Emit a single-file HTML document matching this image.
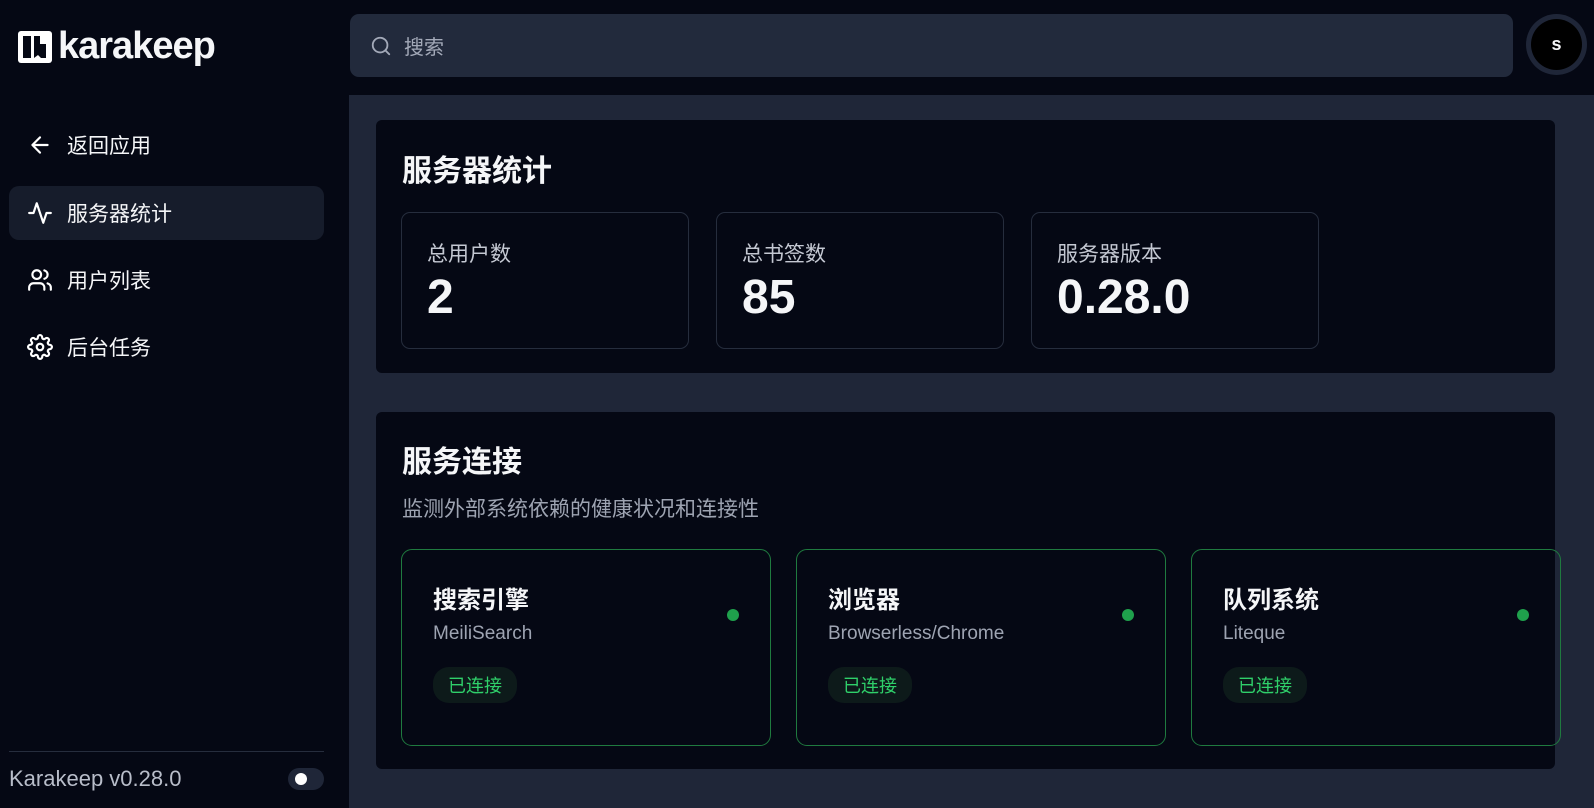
<!DOCTYPE html>
<html><head><meta charset="utf-8"><style>
*{box-sizing:border-box;margin:0;padding:0}
body{width:1594px;height:808px;background:#050814;font-family:"Liberation Sans","Noto Sans CJK SC",sans-serif;color:#f5f6f8;position:relative;overflow:hidden}
.abs{position:absolute}
.side{left:0;top:0;width:349px;height:808px;background:#050814}
.logo{left:18px;top:25px;display:flex;align-items:center;gap:6px;font-size:38px;font-weight:700;letter-spacing:-1px}
.nav{left:9px;width:315px;height:54px;border-radius:10px;display:flex;align-items:center;padding-left:18px;font-size:21px;gap:14px}
.nav svg{width:26px;height:26px;stroke:#fff;fill:none;stroke-width:2;stroke-linecap:round;stroke-linejoin:round}
.main{left:349px;top:95px;width:1245px;height:713px;background:#1f2638}
.search{left:350px;top:14px;width:1163px;height:63px;background:#222a3c;border-radius:9px;display:flex;align-items:center;padding-left:20px;gap:12px;color:#a3a9b8;font-size:20px}
.card{background:#050814;border-radius:6px}
h2{font-size:30px;font-weight:700}
.stat{width:288px;height:137px;border:1px solid #262d3d;border-radius:9px;padding:25px 25px;flex-shrink:0}
.stat .l{font-size:21px;color:#c4c8d2}
.stat .v{font-size:48px;font-weight:700;margin-top:2px}
.svc{width:370px;height:197px;border:1.5px solid #1f7a3f;border-radius:11px;padding:30px 31px;position:relative;flex-shrink:0}
.svc .t{font-size:24px;font-weight:700}
.svc .s{font-size:19px;color:#9ea4b2;margin-top:8px}
.svc .b{display:inline-block;margin-top:22px;background:#0d1a1a;color:#2fd06a;font-size:18px;padding:5px 15px;border-radius:16px}
.svc .d{position:absolute;right:31px;top:59px;width:12px;height:12px;border-radius:50%;background:#1fa04c}
</style></head><body>
<div class="abs side"></div>
<div class="abs logo"><svg width="34" height="32" viewBox="0 0 34 32"><rect x="0" y="0" width="34" height="32" rx="3" fill="#fff"/><rect x="5" y="5" width="8" height="22" fill="#050814"/><path d="M16 5h6v8h6v14h-5l-3-3-4 3z" fill="#050814"/></svg><span>karakeep</span></div>
<div class="abs nav" style="top:118px"><svg viewBox="0 0 24 24"><path d="M19 12H5M12 19l-7-7 7-7"/></svg>返回应用</div>
<div class="abs nav" style="top:186px;background:#161c2b"><svg viewBox="0 0 24 24"><path d="M22 12h-4l-3 9L9 3l-3 9H2"/></svg>服务器统计</div>
<div class="abs nav" style="top:253px"><svg viewBox="0 0 24 24"><path d="M16 21v-2a4 4 0 0 0-4-4H6a4 4 0 0 0-4 4v2"/><circle cx="9" cy="7" r="4"/><path d="M22 21v-2a4 4 0 0 0-3-3.870M16 3.13a4 4 0 0 1 0 7.75"/></svg>用户列表</div>
<div class="abs nav" style="top:320px"><svg viewBox="0 0 24 24"><circle cx="12" cy="12" r="3"/><path d="M19.4 15a1.65 1.65 0 0 0 .33 1.82l.06.06a2 2 0 1 1-2.83 2.83l-.06-.06a1.65 1.65 0 0 0-1.82-.33 1.65 1.65 0 0 0-1 1.51V21a2 2 0 0 1-4 0v-.09A1.65 1.65 0 0 0 9 19.4a1.65 1.65 0 0 0-1.82.33l-.06.06a2 2 0 1 1-2.83-2.830l.06-.06A1.65 1.65 0 0 0 4.68 15a1.65 1.65 0 0 0-1.51-1H3a2 2 0 0 1 0-4h.09A1.65 1.65 0 0 0 4.6 9a1.65 1.65 0 0 0-.33-1.82l-.06-.06a2 2 0 1 1 2.83-2.83l.06.06A1.65 1.65 0 0 0 9 4.68a1.65 1.65 0 0 0 1-1.51V3a2 2 0 0 1 4 0v.09a1.65 1.65 0 0 0 1 1.51 1.65 1.65 0 0 0 1.82-.33l.06-.06a2 2 0 1 1 2.83 2.83l-.06.06A1.65 1.65 0 0 0 19.4 9a1.65 1.65 0 0 0 1.51 1H21a2 2 0 0 1 0 4h-.09a1.65 1.65 0 0 0-1.51 1z"/></svg>后台任务</div>
<div class="abs" style="left:9px;top:751px;width:315px;height:1px;background:#262d3d"></div>
<div class="abs" style="left:9px;top:766px;font-size:22px;color:#b8bdc9">Karakeep v0.28.0</div>
<div class="abs" style="left:288px;top:768px;width:36px;height:22px;border-radius:11px;background:#1f2638"><div style="position:absolute;left:7px;top:5px;width:12px;height:12px;border-radius:50%;background:#fff"></div></div>
<div class="abs search"><svg width="22" height="22" viewBox="0 0 24 24" fill="none" stroke="#a3a9b8" stroke-width="2" stroke-linecap="round"><circle cx="11" cy="11" r="8"/><path d="M21 21l-4.3-4.3"/></svg>搜索</div>
<div class="abs" style="left:1526px;top:14px;width:61px;height:61px;border-radius:50%;background:#1f2638;padding:5px"><div style="width:51px;height:51px;border-radius:50%;background:#000;display:flex;align-items:center;justify-content:center;font-weight:700;font-size:18px">s</div></div>
<div class="abs main"></div>
<div class="abs card" style="left:376px;top:120px;width:1179px;height:253px;padding:26px 26px">
<h2>服务器统计</h2>
<div style="display:flex;gap:27px;margin-top:22px;margin-left:-1px">
<div class="stat"><div class="l">总用户数</div><div class="v">2</div></div>
<div class="stat"><div class="l">总书签数</div><div class="v">85</div></div>
<div class="stat"><div class="l">服务器版本</div><div class="v">0.28.0</div></div>
</div></div>
<div class="abs card" style="left:376px;top:412px;width:1179px;height:357px;padding:25px 26px">
<h2>服务连接</h2>
<div style="font-size:21px;color:#9ea4b2;margin-top:12px">监测外部系统依赖的健康状况和连接性</div>
<div style="display:flex;gap:25px;margin-top:26px;margin-left:-1px">
<div class="svc"><div class="t">搜索引擎</div><div class="s">MeiliSearch</div><div class="b">已连接</div><div class="d"></div></div>
<div class="svc"><div class="t">浏览器</div><div class="s">Browserless/Chrome</div><div class="b">已连接</div><div class="d"></div></div>
<div class="svc"><div class="t">队列系统</div><div class="s">Liteque</div><div class="b">已连接</div><div class="d"></div></div>
</div></div>
</body></html>
